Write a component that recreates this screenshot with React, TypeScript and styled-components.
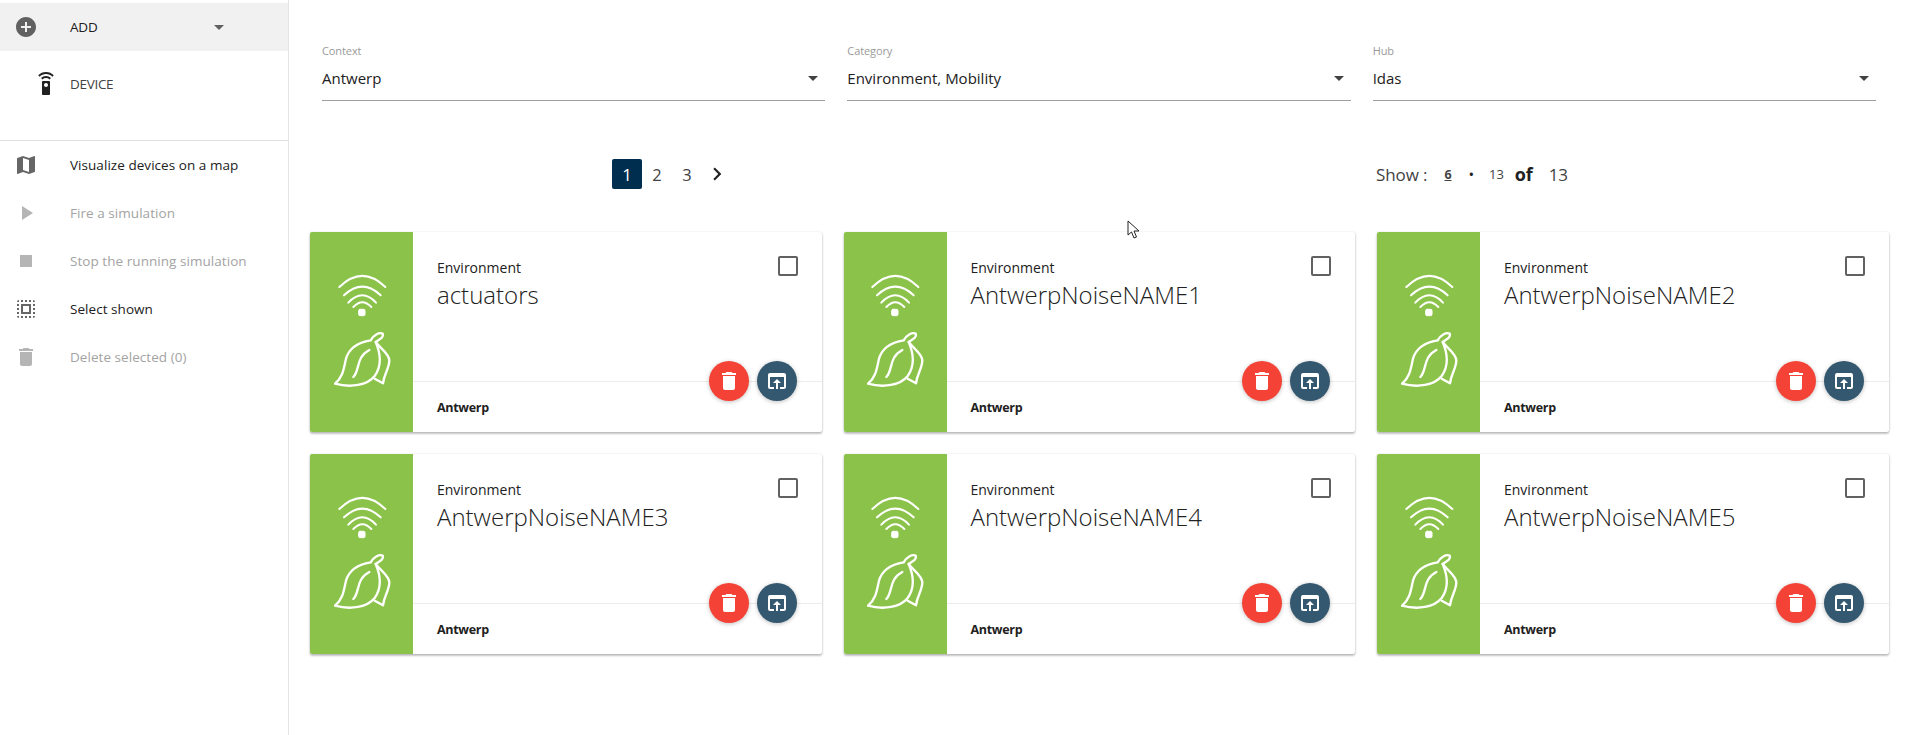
import { createGlobalStyle } from 'styled-components';
import styled from 'styled-components';
import {
  MdAddCircle,
  MdArrowDropDown,
  MdChevronRight,
  MdDelete,
  MdMap,
  MdOpenInBrowser,
  MdPlayArrow,
  MdSelectAll,
  MdSettingsRemote,
  MdStop,
} from 'react-icons/md';
import type { ReactNode } from 'react';

const GlobalStyle = createGlobalStyle`
  html, body {
    margin: 0;
    padding: 0;
    background: #fff;
    font-family: "Open Sans", "Noto Sans", sans-serif;
    color: #212121;
  }
  * { box-sizing: border-box; }
`;

const Page = styled.div`
  position: relative;
  display: flex;
  width: 1905px;
  height: 735px;
  overflow: hidden;
`;

const Sidebar = styled.aside`
  width: 289px;
  flex: none;
  padding-top: 3px;
  border-right: 1px solid #e4e4e4;
`;

const AddRow = styled.div`
  display: flex;
  align-items: center;
  height: 48px;
  padding-left: 14px;
  background: #f1f1f1;
  color: #616161;
`;

const AddLabel = styled.span`
  width: 137px;
  margin-left: 32px;
  font-size: 13.5px;
  letter-spacing: -0.2px;
  color: #212121;
`;

const DeviceRow = styled.div`
  display: flex;
  align-items: center;
  height: 66px;
  padding: 0 0 0 34px;
  margin-bottom: 23px;
  color: #212121;
`;

const DeviceLabel = styled.span`
  margin-left: 12px;
  font-size: 13.5px;
  letter-spacing: -0.3px;
  color: #424242;
`;

const Menu = styled.nav`
  border-top: 1px solid #e0e0e0;
`;

const MenuItem = styled.div<{ $disabled?: boolean }>`
  display: flex;
  align-items: center;
  height: 48px;
  padding-left: 14px;
  font-size: 13.5px;
  letter-spacing: 0.05px;
  color: ${({ $disabled }) => ($disabled ? '#a3a3a3' : '#212121')};
  svg {
    flex: none;
    color: ${({ $disabled }) => ($disabled ? '#b5b5b5' : '#666')};
  }
`;

const MenuLabel = styled.span`
  margin-left: 32px;
`;

const Main = styled.main`
  flex: 1;
  padding-top: 41px;
`;

const Filters = styled.div`
  display: grid;
  grid-template-columns: repeat(3, 1fr);
  gap: 22px;
  width: 1554px;
  margin-left: 33px;
`;

const Field = styled.div`
  height: 60px;
  border-bottom: 1px solid #9e9e9e;
`;

const FieldLabel = styled.div`
  font-size: 11px;
  line-height: 20px;
  letter-spacing: -0.1px;
  color: #9a9a9a;
`;

const FieldValue = styled.div`
  display: flex;
  align-items: center;
  justify-content: space-between;
  height: 32px;
  margin-top: 1px;
  font-size: 15px;
  color: #212121;
  svg {
    color: #424242;
  }
`;

const Toolbar = styled.div`
  display: flex;
  align-items: center;
  height: 30px;
  margin-top: 58px;
  padding-left: 323px;
`;

const PageCurrent = styled.span`
  display: flex;
  align-items: center;
  justify-content: center;
  width: 30px;
  height: 30px;
  border-radius: 2px;
  background: #002e4e;
  color: #fff;
  font-size: 17px;
`;

const PageNumber = styled.span`
  width: 30px;
  text-align: center;
  font-size: 16.5px;
  color: #424242;
`;

const Next = styled.span`
  display: flex;
  width: 29px;
  justify-content: center;
  color: #212121;
`;

const ShowCount = styled.div`
  display: flex;
  align-items: center;
  margin-left: 645px;
  font-size: 17px;
  letter-spacing: -0.1px;
  color: #424242;
`;

const ShowOption = styled.span<{ $active?: boolean }>`
  margin-left: ${({ $active }) => ($active ? '17px' : '0')};
  font-size: ${({ $active }) => ($active ? '12.5px' : '13px')};
  font-weight: ${({ $active }) => ($active ? 700 : 400)};
  text-decoration: ${({ $active }) => ($active ? 'underline' : 'none')};
`;

const Dot = styled.span`
  margin: 0 15px 0 17px;
  font-size: 15px;
  color: #212121;
`;

const Of = styled.span`
  margin: 0 16px 0 11px;
  font-weight: 700;
  font-size: 18px;
  color: #212121;
`;

const Cards = styled.div`
  display: grid;
  grid-template-columns: repeat(3, 511.5px);
  grid-auto-rows: 200px;
  gap: 22px;
  margin: 43px 0 0 21px;
`;

const Card = styled.article`
  display: flex;
  border-radius: 2px;
  background: #fff;
  box-shadow: 0 1px 3px rgba(0, 0, 0, 0.2), 0 2px 2px rgba(0, 0, 0, 0.14), 0 0 1px rgba(0, 0, 0, 0.1);
`;

const Badge = styled.div`
  display: flex;
  align-items: center;
  justify-content: center;
  width: 103px;
  flex: none;
  padding: 0 0 4px 4px;
  background: #8bc34a;
  border-radius: 2px 0 0 2px;
`;

const CardBody = styled.div`
  position: relative;
  display: flex;
  flex: 1;
  flex-direction: column;
`;

const CardTop = styled.div`
  flex: 1;
  padding: 26px 0 0 24px;
  border-bottom: 1px solid #ececec;
`;

const CardType = styled.div`
  font-size: 14px;
  line-height: 20px;
  color: #212121;
`;

const CardName = styled.div`
  margin-top: 3px;
  font-size: 24px;
  font-weight: 300;
  line-height: 28px;
  color: #212121;
`;

const CardFooter = styled.div`
  display: flex;
  align-items: center;
  height: 50px;
  padding-left: 24px;
  font-size: 12.5px;
  font-weight: 700;
  letter-spacing: -0.3px;
  color: #212121;
`;

const Check = styled.span`
  position: absolute;
  top: 24px;
  right: 24px;
  width: 20px;
  height: 20px;
  border: 2px solid #616161;
  border-radius: 2px;
`;

const Actions = styled.div`
  position: absolute;
  right: 25px;
  bottom: 31px;
  display: flex;
  gap: 8px;
`;

const Fab = styled.span<{ $color: string }>`
  display: flex;
  align-items: center;
  justify-content: center;
  width: 40px;
  height: 40px;
  border-radius: 50%;
  background: ${({ $color }) => $color};
  color: #fff;
  box-shadow: 0 1px 4px rgba(0, 0, 0, 0.25);
`;

const Pointer = styled.svg`
  position: absolute;
  left: 1127px;
  top: 220px;
`;

function SensorIcon() {
  return (
    <svg width="60" height="117" viewBox="100 140 180 351" fill="none" stroke="#fff" strokeWidth="6" strokeLinecap="round" strokeLinejoin="round">
      <path d="M116 185 Q185 118 254 185" />
      <path d="M130 210 Q185 158 240 210" />
      <path d="M143 232 Q185 188 226 232" />
      <path d="M158 245 Q185 216 212 245" />
      <rect x="174" y="252" width="19" height="19" rx="4" fill="#fff" strokeWidth="3" />
      <g strokeWidth="7">
        <path d="M103 475 C128 455 130 425 136 400 C146 365 180 350 210 345 C218 330 235 320 246 325 C250 335 240 340 225 350 C240 385 245 420 222 452 C200 480 150 488 103 475 Z" />
        <path d="M225 350 C240 370 265 385 266 405 C266 430 250 445 247 474 L222 460" />
        <path d="M158 455 C178 435 165 395 206 374" />
      </g>
    </svg>
  );
}

function DeviceCard({ name }: { name: string }) {
  return (
    <Card>
      <Badge>
        <SensorIcon />
      </Badge>
      <CardBody>
        <CardTop>
          <CardType>Environment</CardType>
          <CardName>{name}</CardName>
        </CardTop>
        <CardFooter>Antwerp</CardFooter>
        <Check />
        <Actions>
          <Fab $color="#f44336">
            <MdDelete size={24} />
          </Fab>
          <Fab $color="#34586f">
            <MdOpenInBrowser size={24} />
          </Fab>
        </Actions>
      </CardBody>
    </Card>
  );
}

function SelectField({ label, value }: { label: string; value: string }) {
  return (
    <Field>
      <FieldLabel>{label}</FieldLabel>
      <FieldValue>
        {value}
        <MdArrowDropDown size={24} />
      </FieldValue>
    </Field>
  );
}

function SideItem({ icon, label, disabled }: { icon: ReactNode; label: string; disabled?: boolean }) {
  return (
    <MenuItem $disabled={disabled}>
      {icon}
      <MenuLabel>{label}</MenuLabel>
    </MenuItem>
  );
}

const names = [
  'actuators',
  'AntwerpNoiseNAME1',
  'AntwerpNoiseNAME2',
  'AntwerpNoiseNAME3',
  'AntwerpNoiseNAME4',
  'AntwerpNoiseNAME5',
];

export default function App() {
  return (
    <Page>
      <GlobalStyle />
      <Sidebar>
        <AddRow>
          <MdAddCircle size={24} />
          <AddLabel>ADD</AddLabel>
          <MdArrowDropDown size={24} />
        </AddRow>
        <DeviceRow>
          <MdSettingsRemote size={24} />
          <DeviceLabel>DEVICE</DeviceLabel>
        </DeviceRow>
        <Menu>
          <SideItem icon={<MdMap size={24} />} label="Visualize devices on a map" />
          <SideItem icon={<MdPlayArrow size={24} />} label="Fire a simulation" disabled />
          <SideItem icon={<MdStop size={24} />} label="Stop the running simulation" disabled />
          <SideItem icon={<MdSelectAll size={24} />} label="Select shown" />
          <SideItem icon={<MdDelete size={24} />} label="Delete selected (0)" disabled />
        </Menu>
      </Sidebar>
      <Main>
        <Filters>
          <SelectField label="Context" value="Antwerp" />
          <SelectField label="Category" value="Environment, Mobility" />
          <SelectField label="Hub" value="Idas" />
        </Filters>
        <Toolbar>
          <PageCurrent>1</PageCurrent>
          <PageNumber>2</PageNumber>
          <PageNumber>3</PageNumber>
          <Next>
            <MdChevronRight size={26} />
          </Next>
          <ShowCount>
            Show :
            <ShowOption $active>6</ShowOption>
            <Dot>•</Dot>
            <ShowOption>13</ShowOption>
            <Of>of</Of>
            13
          </ShowCount>
        </Toolbar>
        <Cards>
          {names.map((name) => (
            <DeviceCard key={name} name={name} />
          ))}
        </Cards>
      </Main>
      <Pointer width="14" height="20" viewBox="0 0 14 20">
        <path d="M1 1 L1 15 L4.5 12 L7 18 L9.5 17 L7 11 L12 11 Z" fill="#fff" stroke="#222" strokeWidth="1" />
      </Pointer>
    </Page>
  );
}
